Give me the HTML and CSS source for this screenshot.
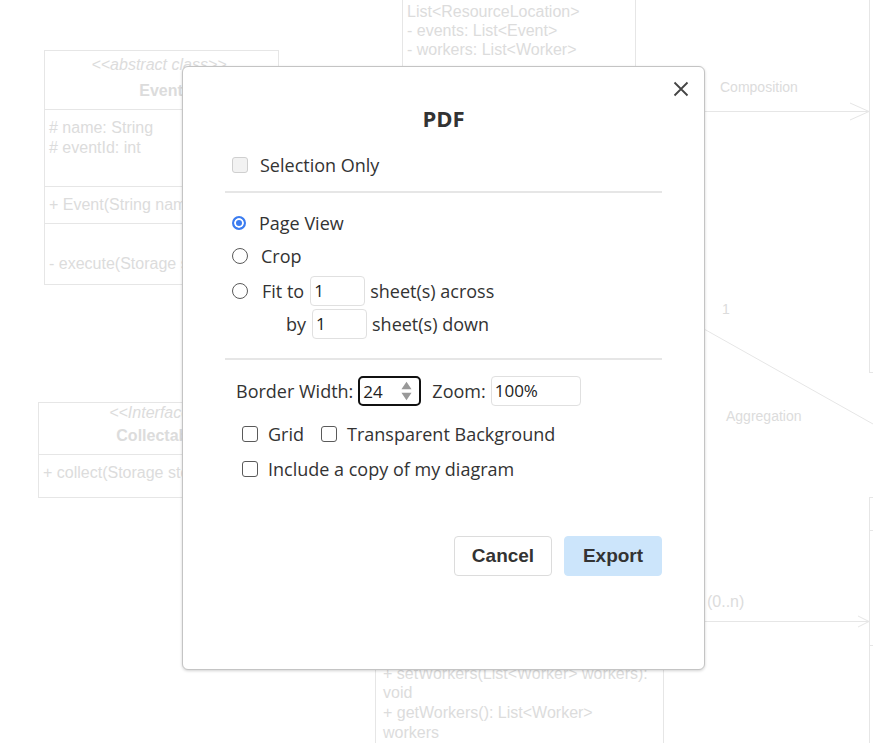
FILE: index.html
```html
<!DOCTYPE html>
<html lang="en">
<head>
<meta charset="UTF-8">
<meta name="viewport" content="width=device-width, initial-scale=1.0">
<title>PDF Export</title>

<link rel="stylesheet" href="styles.css">
</head>

<body>

<div class="canvas">
<svg class="diagram" width="873" height="743" viewBox="0 0 873 743">
<g class="shapes">
<rect x="44.5" y="50.5" width="234" height="234"/>
<line x1="44" y1="109.5" x2="278" y2="109.5"/>
<line x1="44" y1="186.5" x2="278" y2="186.5"/>
<line x1="44" y1="223.5" x2="278" y2="223.5"/>

<rect x="402.5" y="-10" width="233" height="90"/>

<rect x="38.5" y="402.5" width="242" height="95"/>
<line x1="38" y1="454.5" x2="280" y2="454.5"/>

<rect x="375.5" y="650" width="288" height="110"/>

<line x1="869.5" y1="0" x2="869.5" y2="372"/>
<line x1="869" y1="372.5" x2="873" y2="372.5"/>
<line x1="869.5" y1="497" x2="869.5" y2="743"/>
<line x1="869" y1="497.5" x2="873" y2="497.5"/>
<line x1="869" y1="530.5" x2="873" y2="530.5"/>
<line x1="869" y1="645.5" x2="873" y2="645.5"/>

<line x1="640" y1="111.5" x2="869" y2="111.5"/>
<polyline points="850,103 869,111.5 850,120"/>
<line x1="640" y1="621.5" x2="869" y2="621.5"/>
<polyline points="858,616 869,621.5 858,627"/>
<line x1="640" y1="293" x2="873" y2="424"/>
</g>

<g class="labels">
<text x="159" y="70" text-anchor="middle" class="italic">&lt;&lt;abstract class&gt;&gt;</text>
<text x="161" y="96" text-anchor="middle" class="bold">Event</text>
<text x="49" y="133">&#35; name: String</text>
<text x="49" y="153">&#35; eventId: int</text>
<text x="49" y="210">+ Event(String name)</text>
<text x="49" y="269">- execute(Storage storage)</text>

<text x="407" y="17">List&lt;ResourceLocation&gt;</text>
<text x="407" y="36">- events: List&lt;Event&gt;</text>
<text x="407" y="55">- workers: List&lt;Worker&gt;</text>

<text x="159" y="418" text-anchor="middle" class="italic">&lt;&lt;Interface&gt;&gt;</text>
<text x="159" y="441" text-anchor="middle" class="bold">Collectable</text>
<text x="43" y="478">+ collect(Storage storage)</text>

<text x="383" y="679">+ setWorkers(List&lt;Worker&gt; workers):</text>
<text x="383" y="698">void</text>
<text x="383" y="718">+ getWorkers(): List&lt;Worker&gt;</text>
<text x="383" y="738">workers</text>

<text x="720" y="92" class="small">Composition</text>
<text x="722" y="314" class="small">1</text>
<text x="726" y="421" class="small">Aggregation</text>
<text x="707" y="607" class="mid">(0..n)</text>
</g>
</svg>
</div>

<div class="dialog">

<button class="close" aria-label="Close">
<svg width="16" height="16" viewBox="0 0 16 16"><path d="M1.5 1.5 L14.5 14.5 M14.5 1.5 L1.5 14.5"/></svg>
</button>

<h2 class="title">PDF</h2>

<div class="body">

<label class="row sel-row">
<span class="check disabled"></span>
<span>Selection Only</span>
</label>

<hr>

<label class="row radio-row first">
<span class="radio on"></span>
<span>Page View</span>
</label>

<label class="row radio-row">
<span class="radio"></span>
<span>Crop</span>
</label>

<div class="row fit-row">
<span class="radio"></span>
<span class="fit-label">Fit to</span>
<span class="field small-field">1</span>
<span>sheet(s) across</span>
</div>

<div class="row fit-row by-row">
<span class="by-label">by</span>
<span class="field small-field">1</span>
<span>sheet(s) down</span>
</div>

<hr class="second">

<div class="row border-row">
<span>Border Width:</span>
<span class="spin-field">
<span>24</span>
<svg width="12" height="22" viewBox="0 0 12 22"><path d="M6 1 L11.5 9 L0.5 9 Z M6 21 L11.5 13 L0.5 13 Z"/></svg>
</span>
<span class="zoom-label">Zoom:</span>
<span class="field zoom-field">100%</span>
</div>

<div class="row opt-row">
<span class="check"></span>
<span>Grid</span>
<span class="check gap"></span>
<span>Transparent Background</span>
</div>

<div class="row opt-row copy-row">
<span class="check"></span>
<span>Include a copy of my diagram</span>
</div>

<div class="buttons">
<button class="btn">Cancel</button>
<button class="btn primary">Export</button>
</div>

</div>
</div>

</body>
</html>
```

FILE: styles.css
```css
body{
    margin:0;
    width:873px;
    height:743px;
    overflow:hidden;
    background:#fff;
    font-family:"Open Sans", "Noto Sans", sans-serif;
    color:#333;
}

.canvas{
    width:873px;
    height:743px;
}

.diagram{
    display:block;
}

.shapes{
    fill:none;
    stroke:#e6e6e6;
    stroke-width:1;
}

.labels{
    fill:#dcdcdc;
    font-family:"Liberation Sans", Arial, sans-serif;
    font-size:16px;
}

.labels .italic{
    font-style:italic;
}

.labels .bold{
    font-weight:bold;
}

.labels .small{
    font-size:14px;
}

.labels .mid{
    font-size:16px;
}

/* dialog */

.dialog{
    position:absolute;
    left:182px;
    top:66px;
    width:521px;
    height:602px;
    background:#fff;
    border:1px solid #c4c4c4;
    border-radius:6px;
    box-shadow:0 1px 3px rgba(0,0,0,0.18);
}

.close{
    position:absolute;
    top:14px;
    right:15px;
    width:16px;
    height:16px;
    padding:0;
    border:none;
    background:none;
    cursor:pointer;
}

.close svg{
    display:block;
    stroke:#444;
    stroke-width:1.8;
}

.title{
    margin:36px 0 0;
    height:30px;
    line-height:30px;
    text-align:center;
    font-size:22px;
    font-weight:700;
    color:#333;
}

.body{
    margin:0 42px;
}

.row{
    display:flex;
    align-items:center;
    font-size:18px;
    white-space:nowrap;
}

.sel-row{
    margin-top:18px;
    height:28px;
    padding-left:7px;
    gap:12px;
}

hr{
    margin:12px 0 0;
    border:none;
    border-top:2px solid #e6e6e6;
    height:0;
}

hr.second{
    margin-top:19px;
}

.check{
    width:14px;
    height:14px;
    border:1px solid #5a5a5a;
    border-radius:3px;
    background:#fff;
    flex:none;
}

.check.disabled{
    border-color:#cfcfcf;
    background:#f2f2f2;
}

.radio{
    width:14px;
    height:14px;
    border:1px solid #5a5a5a;
    border-radius:50%;
    background:#fff;
    flex:none;
    box-sizing:content-box;
}

.radio.on{
    width:10px;
    height:10px;
    border:2px solid #3b7cf0;
    background:#3b7cf0;
    box-shadow:inset 0 0 0 2px #fff;
}

.radio-row{
    margin-top:3px;
    height:30px;
    padding-left:7px;
    gap:13px;
}

.radio-row.first{
    margin-top:15px;
}

.fit-row{
    margin-top:5px;
    height:30px;
    padding-left:7px;
}

.fit-label{
    margin-left:14px;
    margin-right:6px;
}

.by-row{
    margin-top:3px;
}

.by-label{
    margin-left:54px;
    margin-right:6px;
}

.field{
    box-sizing:border-box;
    height:30px;
    line-height:28px;
    border:1px solid #e0e0e0;
    border-radius:4px;
    padding:0 3px;
    font-size:17px;
    color:#222;
    background:#fff;
}

.small-field{
    width:55px;
    margin-right:5px;
}

.border-row{
    margin-top:16px;
    height:30px;
    padding-left:11px;
}

.spin-field{
    box-sizing:border-box;
    display:flex;
    align-items:center;
    justify-content:space-between;
    width:63px;
    height:30px;
    margin-left:5px;
    padding:0 7px 0 3px;
    border:2px solid #111;
    border-radius:5px;
    font-size:17px;
    color:#222;
}

.spin-field svg{
    fill:#999;
    width:11px;
}

.zoom-label{
    margin-left:11px;
    margin-right:5px;
}

.zoom-field{
    width:90px;
}

.opt-row{
    margin-top:13px;
    height:30px;
    padding-left:17px;
}

.opt-row .check{
    margin-right:10px;
}

.opt-row .check.gap{
    margin-left:17px;
}

.copy-row{
    margin-top:5px;
}

.buttons{
    display:flex;
    justify-content:flex-end;
    gap:12px;
    margin-top:52px;
}

.btn{
    box-sizing:border-box;
    width:98px;
    height:40px;
    border:1px solid #dcdcdc;
    border-radius:4px;
    background:#fff;
    color:#333;
    font-family:"Liberation Sans", Arial, sans-serif;
    font-size:19px;
    font-weight:bold;
    cursor:pointer;
}

.btn.primary{
    background:#cce5fb;
    border-color:#cce5fb;
}
```
